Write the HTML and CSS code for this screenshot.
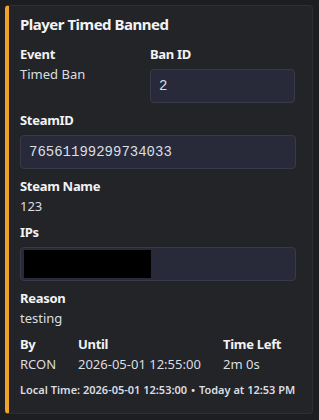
FILE: index.html
```html
<!DOCTYPE html>
<html>
<head>
<meta charset="utf-8">
<link rel="stylesheet" href="styles.css">
</head>
<body>
<div class="embed">
  <div class="title">Player Timed Banned</div>
  <div class="row two">
    <div class="field">
      <div class="name">Event</div>
      <div class="value">Timed Ban</div>
    </div>
    <div class="field">
      <div class="name">Ban ID</div>
      <div class="code">2</div>
    </div>
  </div>
  <div class="field">
    <div class="name">SteamID</div>
    <div class="code">76561199299734033</div>
  </div>
  <div class="field">
    <div class="name">Steam Name</div>
    <div class="value">123</div>
  </div>
  <div class="field">
    <div class="name">IPs</div>
    <div class="code ips"><span class="redact"></span></div>
  </div>
  <div class="field">
    <div class="name">Reason</div>
    <div class="value">testing</div>
  </div>
  <div class="row three">
    <div class="field">
      <div class="name">By</div>
      <div class="value">RCON</div>
    </div>
    <div class="field">
      <div class="name">Until</div>
      <div class="value">2026-05-01 12:55:00</div>
    </div>
    <div class="field">
      <div class="name">Time Left</div>
      <div class="value">2m 0s</div>
    </div>
  </div>
  <div class="footer">Local Time: 2026-05-01 12:53:00 <span class="dot">•</span> Today at 12:53 PM</div>
</div>
</body>
</html>
```

FILE: styles.css
```css
html, body {
  margin: 0;
  padding: 0;
  background: #1d1e22;
}
body {
  font-family: "Noto Sans", "Open Sans", sans-serif;
  color: #dbdee1;
}
.embed {
  box-sizing: border-box;
  margin: 5px 0 0 5px;
  width: 308px;
  height: 409px;
  background: #232428;
  border: 1px solid #2e2f35;
  border-left: 4px solid #f0a22a;
  border-radius: 4px;
  padding: 8px 16px 0 11px;
  display: flex;
  flex-direction: column;
}
.title {
  font-size: 15px;
  line-height: 20px;
  font-weight: 700;
  letter-spacing: -0.5px;
  color: #f2f3f5;
  margin-bottom: 11px;
}
.field {
  display: flex;
  flex-direction: column;
  margin-bottom: 8px;
}
.row .field { margin-bottom: 0; }
.row { display: grid; margin-bottom: 8px; }
.two { grid-template-columns: 130px 1fr; }
.three { grid-template-columns: 58px 145px 1fr; }
.name {
  font-size: 13px;
  line-height: 18px;
  font-weight: 700;
  letter-spacing: -0.3px;
  color: #f2f3f5;
}
.value {
  font-size: 13px;
  line-height: 18px;
  margin-top: 2px;
  color: #dbdee1;
}
.code {
  box-sizing: border-box;
  margin-top: 6px;
  height: 34px;
  background: #282a39;
  border: 1px solid #383a4a;
  border-radius: 4px;
  padding: 0 8px;
  font-family: "Liberation Mono", "DejaVu Sans Mono", monospace;
  font-size: 14px;
  line-height: 32px;
  color: #dbdee1;
}
.two .code { width: 145px; }
.ips {
  padding: 2px 3px;
  line-height: 0;
}
.redact {
  display: inline-block;
  width: 127px;
  height: 28px;
  background: #000;
}
.footer {
  font-size: 11px;
  line-height: 16px;
  font-weight: 600;
  letter-spacing: 0;
  white-space: nowrap;
  color: #dbdee1;
  margin-top: 1px;
}
.dot { margin: 0 1px; }
```
